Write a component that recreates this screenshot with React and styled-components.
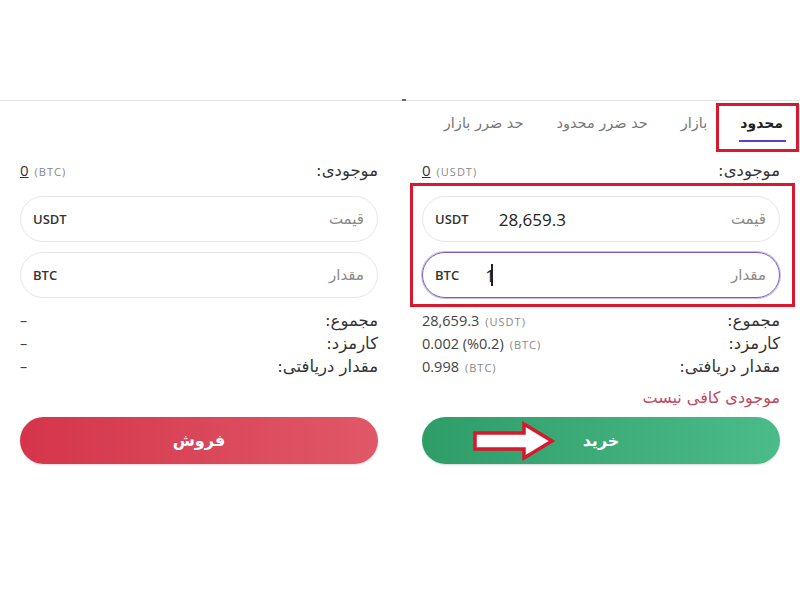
import React from "react";
import styled, { createGlobalStyle } from "styled-components";

const GlobalStyle = createGlobalStyle`
  html, body {
    margin: 0;
    padding: 0;
    background: #fff;
  }
  body {
    font-family: "DejaVu Sans", "Noto Sans", sans-serif;
    color: #333;
  }
`;

const Page = styled.div`
  padding-top: 100px;
  width: 800px;
  height: 600px;
  box-sizing: border-box;
`;

const Panel = styled.div`
  direction: rtl;
  border-top: 1px solid #e4e4e4;
  position: relative;
  &::before {
    content: "";
    position: absolute;
    top: -2px;
    left: 402px;
    width: 4px;
    height: 2px;
    background: #666;
  }
`;

const Tabs = styled.div`
  display: flex;
  gap: 33px;
  padding: 0 17px 5px 0;
  height: 49px;
  box-sizing: border-box;
  align-items: center;
`;

const Tab = styled.div`
  font-size: ${(p) => (p.$active ? 14 : 14.5)}px;
  color: ${(p) => (p.$active ? "#222" : "#777")};
  font-weight: ${(p) => (p.$active ? "bold" : "normal")};
  position: relative;
  ${(p) =>
    p.$active &&
    `
    &::before {
      content: "";
      position: absolute;
      top: -12px;
      bottom: -21px;
      left: -24px;
      right: -16px;
      border: 3px solid #d9182e;
    }
    &::after {
      content: "";
      position: absolute;
      bottom: -11px;
      left: -1px;
      right: -3px;
      height: 2px;
      background: #5a3fd1;
    }
  `}
`;

const Columns = styled.div`
  display: grid;
  grid-template-columns: 358px 358px;
  column-gap: 44px;
  padding: 0 20px 0 22px;
`;

const Column = styled.div`
  display: flex;
  flex-direction: column;
`;

const Row = styled.div`
  display: flex;
  justify-content: space-between;
  align-items: center;
  height: ${(p) => p.$h || 23}px;
  margin-top: ${(p) => p.$mt || 0}px;
`;

const Label = styled.span`
  font-size: 16.5px;
  color: #333;
`;

const Value = styled.span`
  direction: ltr;
  display: flex;
  align-items: baseline;
  gap: 6px;
  font-family: "Open Sans", "DejaVu Sans", sans-serif;
  font-size: 14.5px;
  color: #444;
`;

const Unit = styled.span`
  font-size: 11px;
  color: #888;
  letter-spacing: 1px;
`;

const Zero = styled.span`
  font-size: 15px;
  text-decoration: underline;
  color: #333;
`;

const InputGroup = styled.div`
  display: flex;
  flex-direction: column;
  gap: 10px;
  margin-top: 12px;
  position: relative;
  ${(p) =>
    p.$marked &&
    `
    &::before {
      content: "";
      position: absolute;
      top: -13px;
      bottom: -9px;
      left: -12px;
      right: -15px;
      border: 3px solid #d9182e;
      pointer-events: none;
    }
  `}
`;

const Field = styled.div`
  display: flex;
  align-items: center;
  height: 46px;
  box-sizing: border-box;
  border-radius: 23px;
  border: 1px solid ${(p) => (p.$focus ? "#7a5bc2" : "#e6e6e6")};
  box-shadow: ${(p) => (p.$focus ? "0 0 0 1px #c9bde9" : "none")};
  padding: 0 13px 0 12px;
`;

const FieldLabel = styled.span`
  font-size: 15px;
  color: #8a8a8a;
`;

const FieldValue = styled.span`
  flex: 1;
  direction: ltr;
  text-align: left;
  font-family: "Open Sans", "DejaVu Sans", sans-serif;
  font-size: 17px;
  color: #222;
  padding-left: ${(p) => p.$pad || 0}px;
  display: flex;
  align-items: center;
`;

const Caret = styled.span`
  display: inline-block;
  width: 2px;
  height: 22px;
  background: #222;
  margin-left: -4px;
`;

const FieldUnit = styled.span`
  font-family: "Open Sans", "DejaVu Sans", sans-serif;
  font-size: 13px;
  font-weight: 600;
  color: #333;
`;

const Summary = styled.div`
  display: flex;
  flex-direction: column;
  margin-top: 11px;
`;

const Error = styled.div`
  font-size: 16px;
  color: #c24a5c;
  height: 30px;
  display: flex;
  align-items: center;
  margin-top: 4px;
`;

const ActionButton = styled.button`
  position: relative;
  height: 47px;
  width: 100%;
  border: none;
  border-radius: 24px;
  margin-top: ${(p) => (p.$spaced ? 39 : 5)}px;
  font-family: "DejaVu Sans", sans-serif;
  font-size: 16px;
  font-weight: bold;
  color: #fff;
  background: ${(p) =>
    p.$kind === "buy"
      ? "linear-gradient(90deg, #2f9d68, #4bbb8a)"
      : "linear-gradient(90deg, #d5354b, #e05868)"};
  box-shadow: 0 1px 2px rgba(0, 0, 0, 0.15);
`;

const Arrow = styled.svg`
  position: absolute;
  left: 50px;
  top: 4px;
`;

function BalanceRow({ unit }) {
  return (
    <Row $h={28} $mt={6}>
      <Label>موجودی:</Label>
      <Value>
        <Zero>0</Zero>
        <Unit>({unit})</Unit>
      </Value>
    </Row>
  );
}

function SummaryRow({ label, children }) {
  return (
    <Row>
      <Label>{label}</Label>
      <Value>{children}</Value>
    </Row>
  );
}

export default function App() {
  return (
    <Page>
      <GlobalStyle />
      <Panel>
        <Tabs>
          <Tab $active>محدود</Tab>
          <Tab>بازار</Tab>
          <Tab>حد ضرر محدود</Tab>
          <Tab>حد ضرر بازار</Tab>
        </Tabs>
        <Columns>
          <Column>
            <BalanceRow unit="USDT" />
            <InputGroup $marked>
              <Field>
                <FieldLabel>قیمت</FieldLabel>
                <FieldValue $pad={30}>28,659.3</FieldValue>
                <FieldUnit>USDT</FieldUnit>
              </Field>
              <Field $focus>
                <FieldLabel>مقدار</FieldLabel>
                <FieldValue $pad={26}>
                  1<Caret />
                </FieldValue>
                <FieldUnit>BTC</FieldUnit>
              </Field>
            </InputGroup>
            <Summary>
              <SummaryRow label="مجموع:">
                28,659.3 <Unit>(USDT)</Unit>
              </SummaryRow>
              <SummaryRow label="کارمزد:">
                0.002 (%0.2) <Unit>(BTC)</Unit>
              </SummaryRow>
              <SummaryRow label="مقدار دریافتی:">
                0.998 <Unit>(BTC)</Unit>
              </SummaryRow>
            </Summary>
            <Error>موجودی کافی نیست</Error>
            <ActionButton $kind="buy">
              خرید
              <Arrow width="84" height="40" viewBox="0 0 84 40">
                <path
                  d="M3 12 H52 V3 L80 20 L52 37 V28 H3 Z"
                  fill="#fff"
                  stroke="#d9182e"
                  strokeWidth="3.5"
                  strokeLinejoin="miter"
                />
              </Arrow>
            </ActionButton>
          </Column>
          <Column>
            <BalanceRow unit="BTC" />
            <InputGroup>
              <Field>
                <FieldLabel>قیمت</FieldLabel>
                <FieldValue />
                <FieldUnit>USDT</FieldUnit>
              </Field>
              <Field>
                <FieldLabel>مقدار</FieldLabel>
                <FieldValue />
                <FieldUnit>BTC</FieldUnit>
              </Field>
            </InputGroup>
            <Summary>
              <SummaryRow label="مجموع:">–</SummaryRow>
              <SummaryRow label="کارمزد:">–</SummaryRow>
              <SummaryRow label="مقدار دریافتی:">–</SummaryRow>
            </Summary>
            <ActionButton $kind="sell" $spaced>
              فروش
            </ActionButton>
          </Column>
        </Columns>
      </Panel>
    </Page>
  );
}
